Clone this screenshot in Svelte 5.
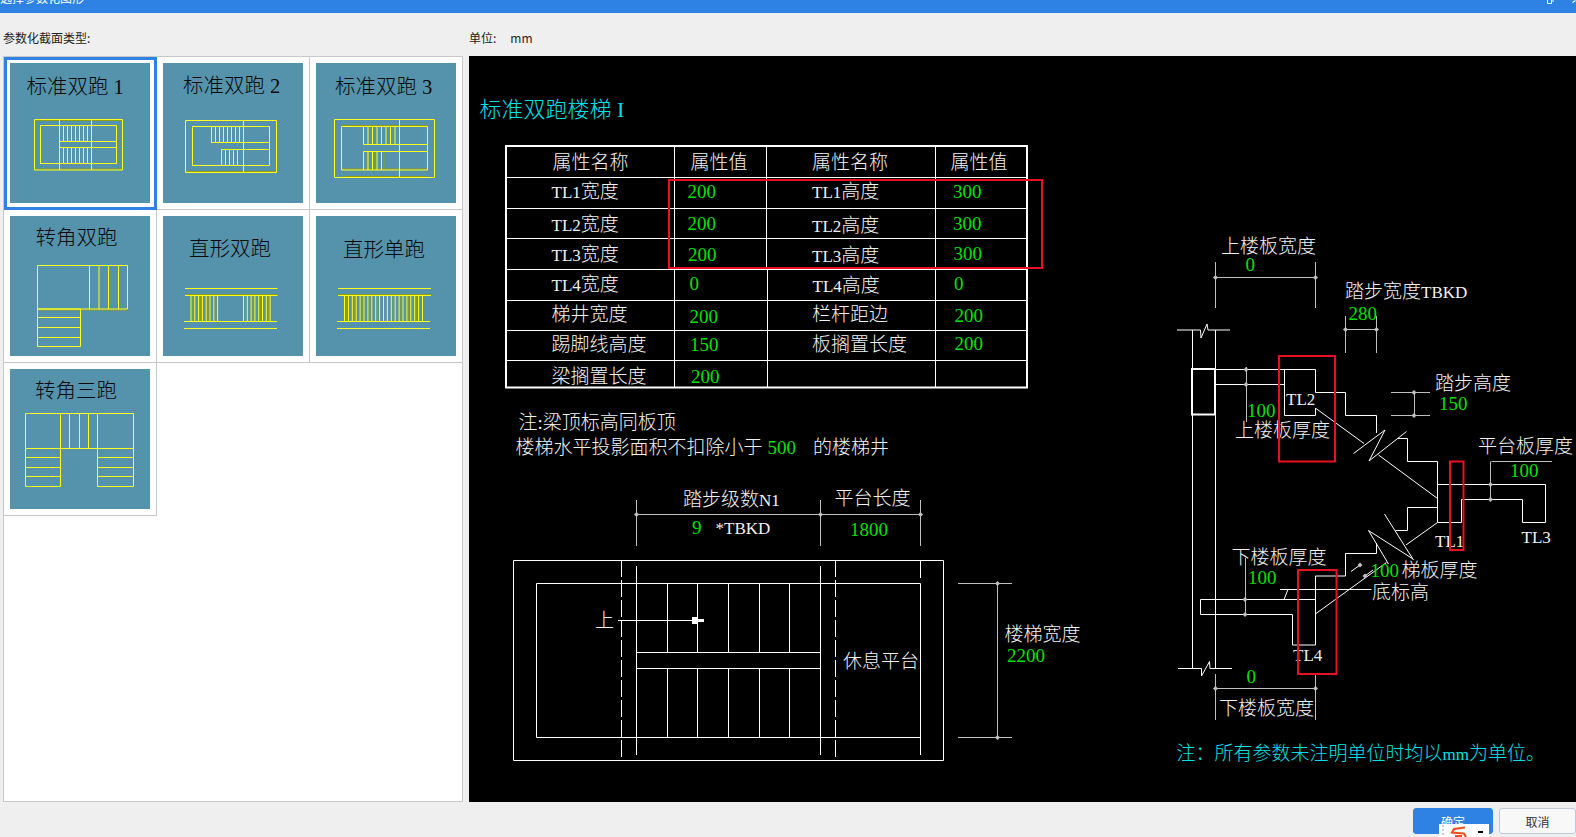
<script lang="ts">
	// rows of vertical tread lines, used by most of the thumbnails
	function treads(x0: number, x1: number, y0: number, y1: number, step: number) {
		let d = '';
		for (let x = x0; x <= x1; x += step) d += `M${x} ${y0}V${y1}`;
		return d;
	}
	function rect(x0: number, y0: number, x1: number, y1: number) {
		return `M${x0} ${y0}H${x1}V${y1}H${x0}Z`;
	}
	function hlines(ys: number[], x0: number, x1: number) {
		return ys.map((y) => `M${x0} ${y}H${x1}`).join('');
	}
	function vlines(xs: number[], y0: number, y1: number) {
		return xs.map((x) => `M${x} ${y0}V${y1}`).join('');
	}
	// latin runs in the CAD labels are narrower than the CJK around them
	function runs(s: string) {
		return s.split(/([A-Za-z0-9*]+)/).filter(Boolean).map((text) => ({
			text,
			latin: /^[A-Za-z0-9*]+$/.test(text)
		}));
	}

	const tiles = [
		{
			name: '标准双跑 1', x: 16.5, y: 31,
			d: rect(24.5, 56.5, 112.5, 107) + rect(30.5, 62.5, 106.5, 100.5) + vlines([49.5, 81.5], 56.5, 107) +
				hlines([78.5, 84.5], 49.5, 106.5) + treads(49.5, 78, 62.5, 78.5, 4) + treads(49.5, 78, 84.5, 100.5, 4),
			o: treads(51.5, 76, 63, 78, 4) + treads(51.5, 76, 85, 100, 4) + hlines([57.5, 106], 25, 112)
		},
		{
			name: '标准双跑 2', x: 20, y: 29.5,
			d: rect(22.5, 57.5, 113.5, 109.5) + rect(29.5, 63.5, 106.5, 102.5) + vlines([80.5], 57.5, 109.5) +
				hlines([79.5], 48.5, 106.5) + hlines([86.5], 58.5, 106.5) + `M48.5 63.5V79.5` +
				treads(48.5, 78, 63.5, 79.5, 4) + treads(58.5, 78, 86.5, 102.5, 4),
			o: treads(50.5, 76, 64, 79, 8) + treads(60.5, 76, 87, 102, 8) + hlines([108.5], 23, 113)
		},
		{
			name: '标准双跑 3', x: 19, y: 31,
			d: rect(18.5, 56.5, 118.5, 114.5) + rect(25.5, 63.5, 111.5, 107) + vlines([83.5], 56.5, 114.5) +
				hlines([81.5, 88.5], 47.5, 111.5) + treads(47.5, 81, 63.5, 81.5, 4.5) + treads(47.5, 69, 88.5, 107, 4.5),
			o: hlines([62.5, 106, 113.5], 26, 111) + treads(50, 68, 89, 106, 9)
		},
		{
			name: '转角双跑', x: 25.5, y: 28.5,
			d: rect(27.5, 49.5, 117.5, 93) + rect(27.5, 93, 70.5, 130.5) + vlines([79.5, 89, 98.5, 108.5], 49.5, 93) +
				hlines([101.5, 111.5, 121.5], 27.5, 70.5),
			o: hlines([94], 28, 117)
		},
		{
			name: '直形双跑', x: 26, y: 39.5,
			d: hlines([72.5, 79.5], 22, 114.5) + hlines([105.5, 112.5], 21, 114) + treads(28, 55, 79.5, 105.5, 3.8) + treads(80.5, 108, 79.5, 105.5, 3.8),
			o: hlines([78.5], 22, 114) + treads(30, 53, 80, 105, 7.6) + treads(82.5, 106, 80, 105, 7.6)
		},
		{
			name: '直形单跑', x: 27, y: 41,
			d: hlines([72.5, 79.5], 22, 115) + hlines([105.5, 112.5], 21, 114) + treads(28.5, 108, 79.5, 105.5, 3.9),
			o: hlines([78.5], 22, 115) + treads(30.5, 108, 80, 105, 7.8)
		},
		{
			name: '转角三跑', x: 25, y: 28.5,
			d: rect(15.5, 44.5, 123.5, 79.5) + rect(15.5, 79.5, 50.5, 117.5) + rect(87.5, 79.5, 123.5, 117.5) +
				vlines([59.5, 69.5, 78.5], 44.5, 79.5) + vlines([50.5, 87.5], 44.5, 79.5) +
				hlines([88.5, 98.5, 107.5], 15.5, 50.5) + hlines([88.5, 98.5, 107.5], 87.5, 123.5),
			o: ''
		}
	];

	const white: [string, number, number][] = [
		['属性名称', 552.5, 169], ['属性值', 690.5, 169], ['属性名称', 812, 169], ['属性值', 950.5, 169],
		['TL1宽度', 551.5, 198], ['TL1高度', 812, 198],
		['TL2宽度', 551.5, 231], ['TL2高度', 812, 232],
		['TL3宽度', 551.5, 261], ['TL3高度', 812, 262],
		['TL4宽度', 551.5, 291], ['TL4高度', 812.5, 292],
		['梯井宽度', 551.5, 321], ['栏杆距边', 812, 321],
		['踢脚线高度', 551.5, 351], ['板搁置长度', 812, 351],
		['梁搁置长度', 551.5, 382.5],
		['注:梁顶标高同板顶', 518.5, 428.5], ['楼梯水平投影面积不扣除小于', 515.5, 453.5], ['的楼梯井', 813, 453.5],
		['踏步级数N1', 683, 505.5], ['平台长度', 834.5, 505], ['*TBKD', 715.5, 534],
		['上', 595, 627], ['休息平台', 843, 667.5], ['楼梯宽度', 1004.5, 640.5],
		['上楼板宽度', 1221, 253], ['踏步宽度TBKD', 1345, 298], ['上楼板厚度', 1235, 436.5],
		['TL2', 1286, 405], ['踏步高度', 1435, 390], ['平台板厚度', 1478, 453],
		['TL1', 1435, 546.5], ['TL3', 1521.5, 543], ['下楼板厚度', 1231.5, 564],
		['底标高', 1372, 599], ['梯板厚度', 1401.5, 576.5], ['TL4', 1293, 660.5], ['下楼板宽度', 1219, 715]
	];

	const green = [
		['200', 687.5, 198], ['300', 953, 198], ['200', 687.5, 230], ['300', 953, 230],
		['200', 688, 261], ['300', 953.5, 260], ['0', 689.5, 290], ['0', 954, 290],
		['200', 689.5, 323], ['200', 954.5, 322], ['150', 690, 351], ['200', 954.5, 350], ['200', 691, 383],
		['500', 767.5, 454], ['9', 692, 534], ['1800', 850, 536], ['2200', 1007, 662],
		['0', 1245.5, 271], ['280', 1348.5, 320], ['100', 1247, 417], ['150', 1439, 410],
		['100', 1510, 477], ['100', 1248, 584], ['100', 1370.5, 577], ['0', 1246.5, 683]
	];

	const tableLines =
		hlines([177.5, 208.5, 238.5, 269.5, 300.5, 330.5, 360.5], 506, 1027) +
		vlines([674.5, 935.5], 146, 387.5) + 'M766.5 146V269M767.5 269V387.5';

	const planLines =
		rect(513.5, 560.5, 943.5, 760.5) + rect(536.5, 583.5, 920.5, 737.5) +
		vlines([636.5, 820.5], 566, 755) + 'M920.5 560V578M920.5 737V755' +
		vlines([667.5, 697.5, 728.5, 759.5, 789.5], 583.5, 652.5) +
		vlines([667.5, 697.5, 728.5, 759.5, 789.5], 668.5, 737.5) +
		hlines([652.5, 668.5], 636.5, 820.5) + 'M618 620.5H700';

	const sectionLines =
		'M1192.5 330V668M1215.5 330V668' +
		'M1177 330H1200.5L1201 338L1207 324L1208 330H1230' +
		'M1178 668.5H1201.5V676L1209.5 661.5L1210 668.5H1232' +
		// upper slab and first flight
		'M1215 369.5H1315.5V392.5H1345.5V415.5H1376.5V433M1215 384.5H1284.5M1284.5 369.5V415.5H1315.5V408' +
		'M1316 408.5L1364 443.5M1353.5 453.5L1385 430L1369 461L1406.5 431.5M1398 438.5H1407.5V461.5H1437.5V522.5H1461.5V499.5H1522.5V522.5H1545.5V484.5H1437.5' +
		'M1378.5 455L1437.5 498.5' +
		// landing and lower flight
		'M1395.5 530.5H1407.5V507.5H1437.5M1406 545L1437.5 522.5M1384.5 514L1413.5 560M1368.5 530.5L1413 559M1368.5 530.5L1388.5 564' +
		'M1376.5 543V553.5H1345.5V576H1315.5V645H1292.5V614.5H1200.5V599.5H1315.5M1316 613.5L1386.5 562.5' +
		'M1280 589.5H1371.5M1288 589.5L1284 599.5M1351 571.5L1360 565M1365 576L1373 570';

	const dimLines =
		'M636.5 500V546M820.5 500V546M920.5 500V546M636 514.5H920.5' +
		'M958 583.5H1012M958 737.5H1012M997.5 583.5V737.5' +
		'M1215.5 262V308M1315.5 262V308M1215 277.5H1315.5' +
		'M1345.5 316V353M1376.5 316V353M1345 329.5H1377' +
		'M1246.5 367V422M1391 392.5H1430M1391 415.5H1430M1414.5 392.5V415.5' +
		'M1491.5 461.5H1552M1490.5 461.5V500M1245.5 558V614.5' +
		'M1215.5 674V720M1315.5 674V720M1215 688.5H1315.5';

	const dots = [
		[636.5, 514.5], [820.5, 514.5], [920.5, 514.5], [997.5, 583.5], [997.5, 737.5],
		[1215.5, 277.5], [1315.5, 277.5], [1345.5, 329.5], [1376.5, 329.5],
		[1246, 369.5], [1246, 384.5], [1414, 392.5], [1414, 415.5], [1490.5, 484.5], [1490.5, 499.5],
		[1245, 599.5], [1245, 614.5], [1360, 565], [1365, 576], [1215.5, 688.5], [1315.5, 688.5]
	];

	const redBoxes = [
		[669, 180, 373, 88], [1279, 356, 56, 105.5], [1450, 461.5, 13.5, 88.5], [1298, 570, 38.5, 104]
	];
</script>

<div class="dialog">
	<header class="titlebar">
		<span class="title">选择参数化图形</span>
		<svg class="winbtns" width="36" height="5" viewBox="0 0 36 5">
			<path d="M7.5 0V3.5H11.5V0M11.5 1H14" fill="none" stroke="#fff" />
			<path d="M33 3V1.5H35V0" fill="none" stroke="#fff" />
		</svg>
	</header>

	<main class="body">
		<section class="left">
			<div class="label">参数化截面类型:</div>
			<div class="list">
				{#each tiles as t, i}
					<div class="cell" class:selected={i === 0}>
						<svg class="thumb" width="140" height="140" viewBox="0 0 140 140">
							<text x={t.x} y={t.y}>{t.name}</text>
							{#if t.o}<path d={t.o} class="olive" />{/if}
							<path d={t.d} class="yellow" />
						</svg>
					</div>
				{/each}
			</div>
		</section>

		<section class="right">
			<div class="label unit"><span>单位:</span><span>mm</span></div>
			<svg class="canvas" viewBox="469 56 1107 746" preserveAspectRatio="none">
				<text x="479.5" y="116.5" class="heading">标准双跑楼梯 I</text>
				<text x="1176.5" y="760" class="note">注：所有参数未注明单位时均以<tspan class="latin">mm</tspan>为单位。</text>

				<path d="M506 146H1027V387.5H506Z" class="frame" />
				<path d={tableLines} class="line" />
				<path d={planLines} class="line" />
				<path d="M621.5 560V760M835.5 560V760" class="dash" />
				<path d="M692 617H698V619H704V622H698V624H692Z" fill="#fff" />
				<path d={sectionLines} class="line" />
				<rect x="1192" y="369" width="23" height="45.5" class="frame" />
				<path d={dimLines} class="dim" />
				{#each dots as [x, y]}
					<path d="M{x - 2.5} {y}L{x} {y - 2.5}L{x + 2.5} {y}L{x} {y + 2.5}Z" fill="#c0c0c0" />
				{/each}

				{#each white as [s, x, y]}
					<text {x} {y} class="w">{#each runs(s) as r}{#if r.latin}<tspan class="latin">{r.text}</tspan>{:else}{r.text}{/if}{/each}</text>
				{/each}
				{#each green as [s, x, y]}
					<text {x} {y} class="g">{s}</text>
				{/each}

				{#each redBoxes as [x, y, w, h]}
					<rect {x} {y} width={w} height={h} class="red" />
				{/each}
			</svg>
		</section>
	</main>

	<footer class="footer">
		<button class="btn primary">确定</button>
		<button class="btn">取消</button>
	</footer>

	<div class="ime">
		<svg width="50" height="13" viewBox="0 0 50 13">
			<path d="M3 1h2v2H3zM3 5h2v2H3zM3 9h2v2H3z" fill="#ccc" />
			<path d="M26 3.5L15 5L13 8.5L25 9.5L27 13M16 12H23" fill="none" stroke="#f0501e" stroke-width="2.2" />
			<path d="M39 8H44" stroke="#000" stroke-width="2" />
		</svg>
	</div>
</div>

<style>
	:global(body) {
		margin: 0;
		background: #efefef;
	}
	.dialog {
		position: relative;
		width: 1576px;
		height: 837px;
		overflow: hidden;
		display: flex;
		flex-direction: column;
		background: #efefef;
		font-family: 'Noto Sans CJK SC', sans-serif;
		color: #222;
	}
	.titlebar {
		height: 13px;
		flex: none;
		display: flex;
		justify-content: space-between;
		background: #2e82e4;
		overflow: hidden;
	}
	.title {
		margin-top: -11px;
		font-size: 12px;
		line-height: 18px;
		color: #fff;
	}
	.winbtns {
		display: block;
	}
	.body {
		flex: 1;
		min-height: 0;
		display: flex;
	}
	.left {
		width: 463px;
		margin-left: 3px;
		display: flex;
		flex-direction: column;
	}
	.label {
		height: 43px;
		flex: none;
		display: flex;
		align-items: center;
		font-size: 12px;
		padding-top: 5px;
		box-sizing: border-box;
	}
	.list {
		flex: 1;
		width: 460px;
		box-sizing: border-box;
		border: 1px solid #c8c8c8;
		background: #fff;
		display: grid;
		grid-template-columns: repeat(3, 153px);
		grid-auto-rows: 153px;
		align-content: start;
	}
	.cell {
		box-sizing: border-box;
		padding: 6px;
		border-right: 1px solid #c8c8c8;
		border-bottom: 1px solid #c8c8c8;
	}
	.cell.selected {
		outline: 3px solid #2e82e4;
		outline-offset: -3px;
	}
	.thumb {
		display: block;
		background: #5592ab;
	}
	.thumb text {
		font-family: 'Liberation Serif', 'Noto Sans CJK SC', serif;
		font-size: 20.5px;
		font-weight: 300;
		fill: #0a0a0a;
	}
	.yellow {
		fill: none;
		stroke: #ffff20;
		stroke-width: 1;
	}
	.olive {
		fill: none;
		stroke: #8f9e14;
		stroke-width: 1;
	}
	.right {
		flex: 1;
		min-width: 0;
		display: flex;
		flex-direction: column;
		margin-left: 3px;
	}
	.unit {
		gap: 14px;
	}
	.canvas {
		flex: 1;
		min-height: 0;
		width: 100%;
		display: block;
		background: #000;
	}
	.canvas text {
		font-family: 'Liberation Serif', 'Noto Sans CJK SC', serif;
		font-size: 19px;
		font-weight: 300;
	}
	.canvas .heading {
		font-size: 22px;
		fill: #00e0e8;
	}
	.canvas .note {
		font-size: 19px;
		fill: #00e0e8;
	}
	.canvas .latin {
		font-size: 17px;
	}
	.w {
		fill: #f2f2f2;
	}
	.g {
		fill: #00e000;
	}
	.line {
		fill: none;
		stroke: #fff;
		stroke-width: 1;
	}
	.frame {
		fill: none;
		stroke: #fff;
		stroke-width: 2;
	}
	.dash {
		fill: none;
		stroke: #fff;
		stroke-width: 1;
		stroke-dasharray: 17 3;
	}
	.dim {
		fill: none;
		stroke: #c0c0c0;
		stroke-width: 1;
	}
	.red {
		fill: none;
		stroke: #e81123;
		stroke-width: 2;
	}
	.footer {
		height: 35px;
		flex: none;
		box-sizing: border-box;
		padding: 6px 0 3px 0;
		display: flex;
		justify-content: flex-end;
		gap: 6px;
	}
	.btn {
		width: 77px;
		padding: 0;
		border: 1px solid #c2c9d6;
		border-radius: 3px;
		background: #f8f8f8;
		color: #333;
		font-family: inherit;
		font-size: 12px;
	}
	.btn.primary {
		width: 80px;
		border-color: #2e82e4;
		background: #2e82e4;
		color: #fff;
	}
	.ime {
		position: absolute;
		left: 1439px;
		top: 824px;
		width: 50px;
		height: 13px;
		background: #fff;
	}
	.ime svg {
		display: block;
	}
</style>
